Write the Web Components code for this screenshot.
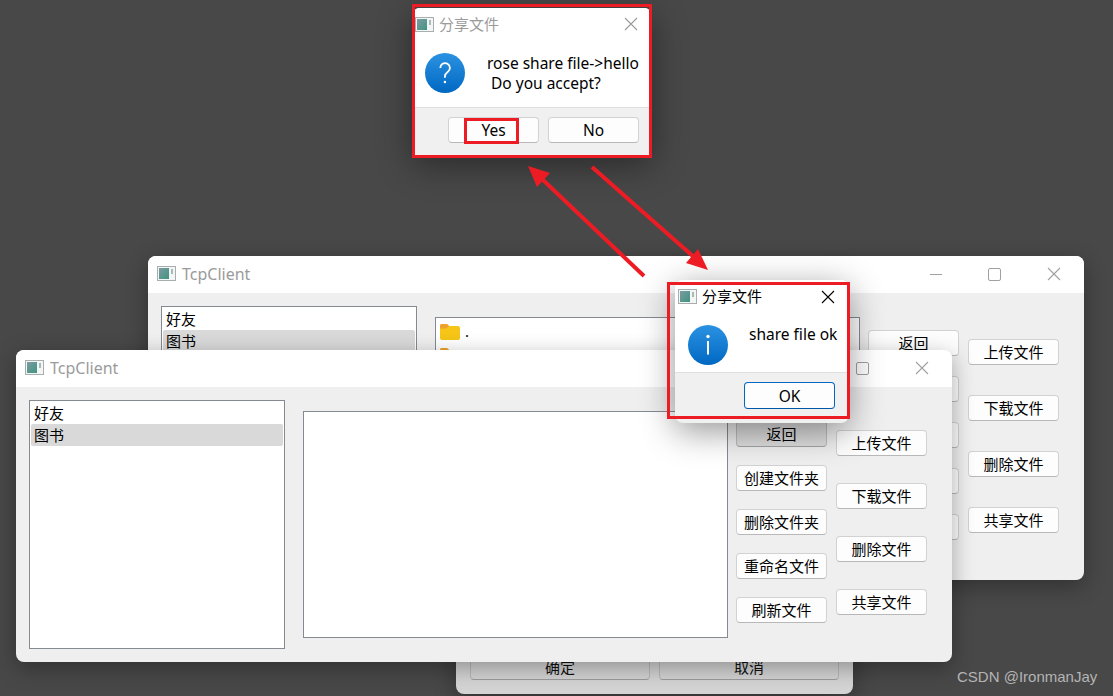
<!DOCTYPE html>
<html lang="zh">
<head>
<meta charset="utf-8">
<title>TcpClient</title>
<style>
  html, body { margin: 0; padding: 0; height: 100%; overflow: hidden; background: #484848; }
  body { font-family: "Noto Sans", "Noto Sans CJK SC", sans-serif; }
  q-button[slot=col1], q-button[slot=col2] { --pb: 2px; }
  q-button[slot=buttons] { --fs: 15.500px; }
</style>
</head>
<body>
<desk-top>
  <tcp-window id="win-c" style="left:456px;top:600px;width:397px;height:94px" dim>
    <dim-buttons></dim-buttons>
  </tcp-window>

  <tcp-window style="left:148px;top:256px;width:936px;height:324px" heading="TcpClient">
    <client-panel list-height="280" file-height="240" style="--col1-top:37px;--col1-gap:20px;--col2-top:46px;--col2-gap:30px">
      <item-list></item-list>
      <file-list>
        <file-row>.</file-row>
        <file-row>..</file-row>
      </file-list>
      <!-- only the right edge of the lower four shows past the front window -->
      <q-button slot="col1">返回</q-button>
      <q-button slot="col1"></q-button>
      <q-button slot="col1"></q-button>
      <q-button slot="col1"></q-button>
      <q-button slot="col1"></q-button>
      <q-button slot="col2">上传文件</q-button>
      <q-button slot="col2">下载文件</q-button>
      <q-button slot="col2">删除文件</q-button>
      <q-button slot="col2">共享文件</q-button>
    </client-panel>
  </tcp-window>

  <tcp-window style="left:16px;top:350px;width:936px;height:312px" heading="TcpClient">
    <client-panel list-height="249" file-height="227" style="--col1-top:34px;--col1-gap:18px;--col2-top:43px;--col2-gap:27px">
      <item-list></item-list>
      <file-list></file-list>
      <q-button slot="col1" pressed>返回</q-button>
      <q-button slot="col1">创建文件夹</q-button>
      <q-button slot="col1">删除文件夹</q-button>
      <q-button slot="col1">重命名文件</q-button>
      <q-button slot="col1">刷新文件</q-button>
      <q-button slot="col2">上传文件</q-button>
      <q-button slot="col2">下载文件</q-button>
      <q-button slot="col2">删除文件</q-button>
      <q-button slot="col2">共享文件</q-button>
    </client-panel>
  </tcp-window>

  <msg-box style="left:412px;top:8px;width:240px;height:149px" heading="分享文件" kind="question" inactive>
    <span slot="text">rose share file-&gt;hello
 Do you accept?</span>
    <q-button slot="buttons">Yes</q-button>
    <q-button slot="buttons">No</q-button>
  </msg-box>

  <msg-box style="left:675px;top:280px;width:174px;height:143px" heading="分享文件" kind="info">
    <span slot="text">share file ok</span>
    <q-button slot="buttons" style="--h:27px" primary>OK</q-button>
  </msg-box>

  <red-marks></red-marks>
  <water-mark>CSDN @IronmanJay</water-mark>
</desk-top>

<script>
const appIcon = `
<svg width="19" height="15" viewBox="0 0 19 15">
  <rect x=".5" y=".5" width="18" height="14" fill="#f4f6f6" stroke="#a8adad"/>
  <defs><linearGradient id="ai" x1="0" y1="0" x2="1" y2="1">
    <stop offset="0" stop-color="#7d9ba2"/><stop offset="1" stop-color="#3f9480"/>
  </linearGradient></defs>
  <rect x="2" y="2" width="10" height="11" fill="url(#ai)"/>
  <rect x="14" y="3" width="2" height="5" fill="#a9bbb9"/>
</svg>`;

const closeIcon = `
<svg width="14" height="14" viewBox="0 0 14 14" fill="none" stroke="currentColor" stroke-width="1.1">
  <path d="M1 1l12 12M13 1L1 13"/>
</svg>`;

class DeskTop extends HTMLElement {
  constructor() {
    super();
    this.attachShadow({ mode: "open" });
    this.shadowRoot.innerHTML = `
      <style>
        :host { display: block; position: relative; width: 1113px; height: 696px; overflow: hidden; background: #484848; }
      </style>
      <slot></slot>`;
  }
}

class TcpWindow extends HTMLElement {
  constructor() {
    super();
    this.attachShadow({ mode: "open" });
    const heading = this.getAttribute("heading");
    const bar = heading ? `
      <header>
        ${appIcon}
        <span class="name">${heading}</span>
        <div class="ctl">
          <span><svg width="14" height="14" viewBox="0 0 14 14"><path d="M1 7.500h12" stroke="#a0a0a0" stroke-width="1"/></svg></span>
          <span><svg width="14" height="14" viewBox="0 0 14 14"><rect x=".5" y="1.500" width="12" height="12" rx="1.500" fill="none" stroke="#a0a0a0"/></svg></span>
          <span style="color:#a0a0a0">${closeIcon}</span>
        </div>
      </header>` : "";
    this.shadowRoot.innerHTML = `
      <style>
        :host {
          position: absolute; display: flex; flex-direction: column;
          border-radius: 8px; overflow: hidden; background: #efefef;
          box-shadow: 0 6px 22px rgba(0,0,0,.32);
        }
        :host([dim]) { background: #d4d4d4; border-radius: 0 0 8px 8px; }
        header { flex: none; box-sizing: border-box; height: 37px; background: #fff; display: flex; align-items: center; padding: 0 1px 2px 9px; }
        header svg { display: block; }
        .name { margin-left: 6px; font-size: 16px; color: #9b9b9b; }
        .ctl { margin-left: auto; display: flex; }
        .ctl span { width: 59px; display: flex; justify-content: center; }
        main { flex: 1; min-height: 0; }
      </style>
      ${bar}
      <main><slot></slot></main>`;
  }
}

class ClientPanel extends HTMLElement {
  constructor() {
    super();
    this.attachShadow({ mode: "open" });
    this.shadowRoot.innerHTML = `
      <style>
        :host { display: flex; align-items: flex-start; padding: 13px 0 0 13px; }
        .main { display: flex; gap: 18px; }
        .col { display: flex; flex-direction: column; width: 91px; }
        .c1 { margin: calc(var(--col1-top) - 13px) 0 0 8px; gap: var(--col1-gap); }
        .c2 { margin: calc(var(--col2-top) - 13px) 0 0 9px; gap: var(--col2-gap); }
      </style>
      <div class="main"><slot></slot></div>
      <div class="col c1"><slot name="col1"></slot></div>
      <div class="col c2"><slot name="col2"></slot></div>`;
  }
  connectedCallback() {
    this.querySelector("item-list").style.height = this.getAttribute("list-height") + "px";
    this.querySelector("file-list").style.height = this.getAttribute("file-height") + "px";
  }
}

class ItemList extends HTMLElement {
  constructor() {
    super();
    this.attachShadow({ mode: "open" });
    this.shadowRoot.innerHTML = `
      <style>
        :host { display: block; box-sizing: border-box; width: 256px; background: #fff; border: 1px solid #858a92; padding: 1px; color: #000; font-size: 15px; }
        div { height: 22px; line-height: 22px; padding-left: 3px; border-radius: 2px; }
        .sel { background: #d9d9d9; }
      </style>
      <div>好友</div>
      <div class="sel">图书</div>`;
  }
}

class FileList extends HTMLElement {
  constructor() {
    super();
    this.attachShadow({ mode: "open" });
    this.shadowRoot.innerHTML = `
      <style>
        :host { display: block; box-sizing: border-box; width: 425px; margin-top: 11px; background: #fff; border: 1px solid #858a92; padding: 1px 2px; font-size: 15px; color: #000; }
      </style>
      <slot></slot>`;
  }
}

class FileRow extends HTMLElement {
  constructor() {
    super();
    this.attachShadow({ mode: "open" });
    this.shadowRoot.innerHTML = `
      <style>
        :host { display: flex; align-items: center; height: 24px; gap: 5px; padding-left: 1px; }
        svg { flex: none; }
      </style>
      <svg width="21" height="17" viewBox="0 0 21 17">
        <path d="M1 3a2 2 0 0 1 2-2h5l2 2h9a2 2 0 0 1 2 2v10a2 2 0 0 1-2 2H3a2 2 0 0 1-2-2z" fill="#f5c518"/>
        <path d="M1 3a2 2 0 0 1 2-2h5l2 2-3 2.500H1z" fill="#f0a030"/>
      </svg>
      <slot></slot>`;
  }
}

class QButton extends HTMLElement {
  constructor() {
    super();
    this.attachShadow({ mode: "open" });
    this.shadowRoot.innerHTML = `
      <style>
        :host {
          display: flex; align-items: center; justify-content: center; box-sizing: border-box;
          width: 91px; height: var(--h, 26px); padding-bottom: var(--pb, 0);
          background: #fdfdfd; border: 1px solid #d2d2d2; border-bottom-color: #b8b8b8; border-radius: 4px;
          font-size: var(--fs, 15px); color: #000; white-space: nowrap;
        }
        :host([pressed]) { background: #dedede; border-color: #bcbcbc; border-bottom-color: #a4a4a4; }
        :host([primary]) { border: 1px solid #0067c0; border-bottom-color: #0058a8; }
      </style>
      <slot></slot>`;
  }
}

class DimButtons extends HTMLElement {
  constructor() {
    super();
    this.attachShadow({ mode: "open" });
    this.shadowRoot.innerHTML = `
      <style>
        :host { display: flex; gap: 9px; padding: 54px 14px 0; height: 26px; }
        div { box-sizing: border-box; width: 180px; height: 26px; padding-bottom: 2px; display: flex; align-items: center; justify-content: center; font-size: 15px; color: #111; border: 1px solid #b8b8b8; border-bottom-color: #9c9c9c; border-radius: 4px; }
      </style>
      <div>确定</div><div>取消</div>`;
  }
}

class MsgBox extends HTMLElement {
  constructor() {
    super();
    this.attachShadow({ mode: "open" });
    const icons = {
      question: `<path d="M15.300 15a4.800 4.800 0 1 1 7.600 3.800c-2 1.500-3 2.500-3 4.700v1.200" fill="none" stroke="#fff" stroke-width="1.800"/><circle cx="19.900" cy="29" r="1.200" fill="#fff"/>`,
      info: `<circle cx="20" cy="11.500" r="1.700" fill="#fff"/><rect x="19" y="16" width="2" height="13.500" fill="#fff"/>`,
    };
    const id = "g" + this.getAttribute("kind");
    this.shadowRoot.innerHTML = `
      <style>
        :host {
          position: absolute; display: flex; flex-direction: column;
          background: #f0f0f0; border-radius: 8px; overflow: hidden;
          box-shadow: 0 8px 34px rgba(0,0,0,.42);
        }
        header { flex: none; box-sizing: border-box; height: 34px; background: #fff; display: flex; align-items: center; padding: 0 0 1px 3px; }
        :host([kind=question]) header { padding-bottom: 2px; }
        header svg { display: block; }
        .name { margin: 0 0 2px 5px; font-size: 15px; color: #000; }
        :host([inactive]) .name, :host([inactive]) .x { color: #9b9b9b; }
        .x { margin-left: auto; margin-right: 14px; color: #000; }
        main { flex: none; box-sizing: border-box; height: 59px; background: #fff; border-bottom: 1px solid #dfdfdf; display: flex; padding: 11px 0 0 13px; gap: 21px; }
        :host([kind=question]) main { height: 66px; gap: 22px; }
        main svg { flex: none; }
        .text { font-size: 15.500px; line-height: 20px; white-space: pre; color: #000; margin-top: -1px; }
        :host([kind=question]) .text { margin-top: 0; }
        footer { flex: 1; display: flex; justify-content: flex-end; gap: 9px; padding: 9px 14px 0 0; }
        :host([kind=question]) footer { padding-right: 13px; }
      </style>
      <header>${appIcon}<span class="name">${this.getAttribute("heading")}</span><span class="x">${closeIcon}</span></header>
      <main>
        <svg width="40" height="40" viewBox="0 0 40 40">
          <defs><linearGradient id="${id}" x1="0" y1="0" x2="0" y2="1">
            <stop offset="0" stop-color="#2b92e2"/><stop offset="1" stop-color="#0068c2"/>
          </linearGradient></defs>
          <circle cx="20" cy="20" r="20" fill="url(#${id})"/>
          ${icons[this.getAttribute("kind")]}
        </svg>
        <div class="text"><slot name="text"></slot></div>
      </main>
      <footer><slot name="buttons"></slot></footer>`;
  }
}

class RedMarks extends HTMLElement {
  constructor() {
    super();
    this.attachShadow({ mode: "open" });
    this.shadowRoot.innerHTML = `
      <style>
        :host { position: absolute; left: 0; top: 0; width: 1113px; height: 696px; pointer-events: none; }
        svg { display: block; }
      </style>
      <svg width="1113" height="696" viewBox="0 0 1113 696" fill="none">
        <rect x="413.500" y="5.500" width="237" height="151" stroke="#ed1c24" stroke-width="3"/>
        <rect x="465.500" y="119.500" width="52" height="23" stroke="#ed1c24" stroke-width="3"/>
        <rect x="668.500" y="283.500" width="180" height="134" stroke="#ed1c24" stroke-width="3"/>
        <path d="M644 276L542 179" stroke="#ed1c24" stroke-width="4"/>
        <path d="M528 166l22 7-13 14z" fill="#ed1c24"/>
        <path d="M592 167L695 258" stroke="#ed1c24" stroke-width="4"/>
        <path d="M708 270l-22-7 12-14z" fill="#ed1c24"/>
      </svg>`;
  }
}

class WaterMark extends HTMLElement {
  constructor() {
    super();
    this.attachShadow({ mode: "open" });
    this.shadowRoot.innerHTML = `
      <style>
        :host { position: absolute; left: 957px; top: 668px; font: 15px/18px "Liberation Sans", sans-serif; color: #b4b4b4; white-space: nowrap; }
      </style>
      <slot></slot>`;
  }
}

customElements.define("desk-top", DeskTop);
customElements.define("tcp-window", TcpWindow);
customElements.define("client-panel", ClientPanel);
customElements.define("item-list", ItemList);
customElements.define("file-list", FileList);
customElements.define("file-row", FileRow);
customElements.define("q-button", QButton);
customElements.define("dim-buttons", DimButtons);
customElements.define("msg-box", MsgBox);
customElements.define("red-marks", RedMarks);
customElements.define("water-mark", WaterMark);
</script>
</body>
</html>
